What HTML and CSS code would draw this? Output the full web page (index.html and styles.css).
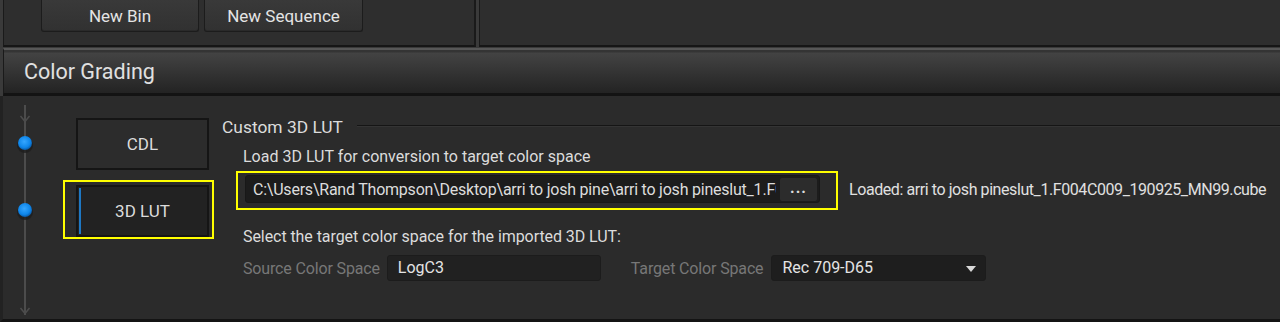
FILE: index.html
```html
<!DOCTYPE html>
<html>
<head>
<meta charset="utf-8">
<link rel="stylesheet" href="styles.css">
</head>
<body>
<div class="app">
  <div class="top">
    <div class="pane pane-left">
      <button class="btn">New Bin</button>
      <button class="btn btn-wide">New Sequence</button>
    </div>
    <div class="pane pane-right"></div>
  </div>
  <div class="section-header">Color Grading</div>
  <div class="section-body">
    <svg class="timeline" width="50" height="223" viewBox="0 0 50 223">
      <defs>
        <radialGradient id="dotg" cx="45%" cy="40%" r="60%">
          <stop offset="0" stop-color="#35a6ff"/>
          <stop offset="0.7" stop-color="#0e86ea"/>
          <stop offset="1" stop-color="#0a5aa6"/>
        </radialGradient>
      </defs>
      <line x1="25" y1="9" x2="25" y2="219" stroke="#4c4c4c" stroke-width="2"/>
      <polyline points="20.5,20 25,25.5 29.5,20" fill="none" stroke="#4c4c4c" stroke-width="1.5"/>
      <polyline points="20.5,212 25,217.5 29.5,212" fill="none" stroke="#4c4c4c" stroke-width="1.5"/>
      <ellipse cx="25" cy="49.5" rx="8" ry="7.5" fill="#1e1e1e" opacity="0.8"/>
      <circle cx="25" cy="47" r="7" fill="url(#dotg)"/>
      <ellipse cx="25" cy="116.5" rx="8" ry="7.5" fill="#1e1e1e" opacity="0.8"/>
      <circle cx="25" cy="114" r="7" fill="url(#dotg)"/>
    </svg>
    <div class="steps">
      <button class="step">CDL</button>
      <button class="step step-active highlight-step">3D LUT</button>
    </div>
    <div class="content">
      <div class="group-title"><span class="group-name">Custom 3D LUT</span><span class="rule"></span></div>
      <div class="group-inner">
        <div class="label">Load 3D LUT for conversion to target color space</div>
        <div class="lut-row">
          <div class="file-field highlight-field">
            <span class="path">C:\Users\Rand Thompson\Desktop\arri to josh pine\arri to josh pineslut_1.F004C009_190925_MN99.cube</span>
            <button class="browse">...</button>
          </div>
          <span class="loaded">Loaded: arri to josh pineslut_1.F004C009_190925_MN99.cube</span>
        </div>
        <div class="label label-select">Select the target color space for the imported 3D LUT:</div>
        <div class="cs-row">
          <span class="cs-label">Source Color Space</span>
          <div class="cs-box">LogC3</div>
          <span class="cs-label cs-label-target">Target Color Space</span>
          <div class="cs-box cs-select">Rec 709-D65<span class="caret"></span></div>
        </div>
      </div>
    </div>
  </div>
</div>
</body>
</html>
```

FILE: styles.css
```css
* { box-sizing: border-box; }
html, body { margin: 0; padding: 0; }
body {
  width: 1280px;
  height: 322px;
  overflow: hidden;
  background: #3a3a3a;
  font-family: Roboto, "Liberation Sans", sans-serif;
  color: #dcdcdc;
}
.app { width: 1280px; }

.top {
  display: flex;
  height: 47px;
  padding-left: 3px;
  gap: 3px;
}
.pane {
  background: #2e2e2e;
  border-bottom: 2px solid #161616;
  border-left: 1px solid #1a1a1a;
}
.pane-left {
  width: 473px;
  border-right: 2px solid #1a1a1a;
  display: flex;
  align-items: flex-start;
  gap: 5px;
  padding-left: 37px;
}
.pane-right { flex: 1; }

.btn {
  width: 158px;
  height: 32px;
  margin: 0;
  padding: 0;
  border: 1px solid #1c1c1c;
  border-top: none;
  border-radius: 0 0 3px 3px;
  background: linear-gradient(#393939, #313131);
  color: #e4e4e4;
  font-family: Roboto, "Liberation Sans", sans-serif;
  font-size: 17px;
  box-shadow: inset 0 -1px 0 #2a2a2a;
}
.btn-wide { width: 159px; }

.section-header {
  margin-top: 1px;
  margin-left: 3px;
  height: 48px;
  border-top: 2px solid #575757;
  border-bottom: 3px solid #131313;
  border-left: 1px solid #1a1a1a;
  background: linear-gradient(#343434 0, #343434 2px, #434343 3px, #232323 100%);
  font-size: 21.5px;
  color: #e0e0e0;
  padding-left: 20px;
  line-height: 44px;
}

.section-body {
  display: flex;
  height: 226px;
  background: #2b2b2b;
  border-bottom: 3px solid #141414;
  border-left: 3px solid #222;
}
.timeline {
  flex: none;
  display: block;
  margin-left: -3px;
}

.steps {
  flex: none;
  display: flex;
  flex-direction: column;
  gap: 15px;
  margin-left: 26px;
  padding-top: 22px;
  width: 133px;
}
.step {
  position: relative;
  height: 52px;
  width: 133px;
  margin: 0;
  padding: 0;
  background: #2c2c2c;
  border: 2px solid #151515;
  color: #dcdcdc;
  font-family: Roboto, "Liberation Sans", sans-serif;
  font-size: 17px;
}
.step-active {
  background: #222;
}
.step-active::before {
  content: "";
  position: absolute;
  left: 1px;
  top: 1px;
  bottom: 1px;
  width: 2px;
  background: #1e78c4;
}
.highlight-step::after {
  content: "";
  position: absolute;
  left: -15px;
  right: -7px;
  top: -7px;
  bottom: -4px;
  border: 2px solid #ffff00;
}

.content {
  flex: 1;
  margin-left: 13px;
  padding-top: 22px;
}
.group-title {
  display: flex;
  align-items: center;
  height: 18px;
  gap: 14px;
}
.group-name {
  font-size: 17.4px;
  color: #dcdcdc;
  white-space: nowrap;
}
.rule {
  flex: 1;
  height: 2px;
  margin-top: -3px;
  border-top: 1px solid #151515;
  border-bottom: 1px solid #343434;
}
.group-inner {
  padding-left: 21px;
  padding-top: 11px;
}
.label {
  font-size: 16px;
  line-height: 20px;
  height: 20px;
  color: #dcdcdc;
  white-space: nowrap;
}
.lut-row {
  display: flex;
  align-items: center;
  margin-top: 8px;
  margin-left: 2px;
  height: 28px;
}
.file-field {
  position: relative;
  display: flex;
  align-items: center;
  width: 575px;
  height: 28px;
  background: #1c1c1c;
  border: 1px solid #181818;
  border-radius: 3px;
  padding-left: 7px;
  padding-right: 1px;
}
.highlight-field::after {
  content: "";
  position: absolute;
  left: -10px;
  right: -19px;
  top: -5px;
  bottom: -8px;
  border: 2px solid #ffff00;
}
.path {
  flex: 1;
  overflow: hidden;
  white-space: nowrap;
  margin-right: 3px;
  font-size: 16px;
  letter-spacing: -0.22px;
  color: #dcdcdc;
}
.browse {
  flex: none;
  width: 39px;
  height: 25px;
  margin: 0;
  padding: 0 0 4px;
  border: 1px solid #1c1c1c;
  border-radius: 3px;
  background: #2c2c2c;
  color: #dcdcdc;
  font-family: Roboto, "Liberation Sans", sans-serif;
  font-size: 16px;
  font-weight: bold;
  letter-spacing: 1px;
}
.loaded {
  margin-left: 29px;
  font-size: 16px;
  letter-spacing: -0.42px;
  color: #e0e0e0;
  white-space: nowrap;
}
.label-select { margin-top: 24px; letter-spacing: -0.07px; }

.cs-row {
  display: flex;
  align-items: center;
  height: 26px;
  margin-top: 8px;
}
.cs-label {
  font-size: 16px;
  letter-spacing: -0.15px;
  color: #777;
  white-space: nowrap;
}
.cs-label-target { margin-left: 30px; }
.cs-box {
  position: relative;
  width: 214px;
  height: 26px;
  margin-left: 7px;
  background: #212121;
  border: 1px solid #1c1c1c;
  border-radius: 3px;
  padding-left: 10px;
  font-size: 16px;
  line-height: 24px;
  color: #e4e4e4;
}
.cs-select {
  width: 215px;
  margin-left: 8px;
  background: #1e1e1e;
}
.caret {
  position: absolute;
  right: 9px;
  top: 10px;
  width: 0;
  height: 0;
  border-left: 5px solid transparent;
  border-right: 5px solid transparent;
  border-top: 6px solid #d8d8d8;
}
```
